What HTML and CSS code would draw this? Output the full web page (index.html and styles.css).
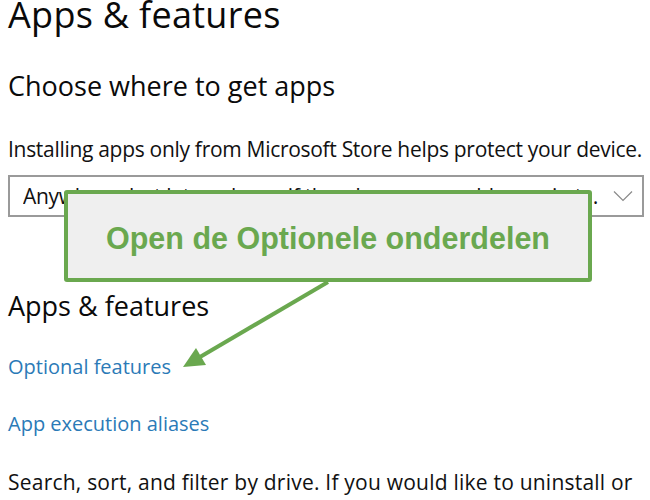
FILE: index.html
```html
<!DOCTYPE html>
<html>
<head>
<meta charset="utf-8">
<link rel="stylesheet" href="styles.css">
</head>
<body>
<main class="page">
  <h1 class="title">Apps &amp; features</h1>
  <h2 class="subtitle first">Choose where to get apps</h2>
  <p class="text install">Installing apps only from Microsoft Store helps protect your device.</p>
  <div class="select">
    <span class="select-text">Anywhere, but let me know if there's a comparable app in the Microsoft Store</span>
    <svg class="chev" width="20" height="12" viewBox="0 0 20 12"><path d="M1 1.5 L10 10.5 L19 1.5" fill="none" stroke="#8a8a8a" stroke-width="1.2"/></svg>
  </div>
  <h2 class="subtitle second">Apps &amp; features</h2>
  <a class="link l1" href="#">Optional features</a>
  <a class="link l2" href="#">App execution aliases</a>
  <p class="text last">Search, sort, and filter by drive. If you would like to uninstall or</p>
</main>
<div class="callout">Open de Optionele onderdelen</div>
<svg class="arrow" width="650" height="500" viewBox="0 0 650 500">
  <line x1="328" y1="282" x2="200" y2="357" stroke="#6aa84f" stroke-width="4"/>
  <polygon points="183,367 196,348 206,365" fill="#6aa84f"/>
</svg>
</body>
</html>
```
FILE: styles.css
```css
html, body { margin: 0; padding: 0; background: #fff; }
body { width: 650px; height: 500px; overflow: hidden; position: relative; font-family: "Open Sans", "Noto Sans", sans-serif; color: #111; }
.page { padding: 0 0 0 8px; display: flex; flex-direction: column; align-items: flex-start; }
.title { margin: -8px 0 0 0; font-weight: 400; font-size: 36px; line-height: 46px; letter-spacing: 0.3px; color: #0a0a0a; }
.subtitle { margin: 0; font-weight: 400; font-size: 27px; line-height: 36px; letter-spacing: 0; color: #0a0a0a; }
.subtitle.first { margin-top: 30px; }
.text { margin: 0; font-size: 21px; line-height: 28px; }
.install { margin-top: 31px; letter-spacing: -0.3px; }
.select { margin-top: 12px; box-sizing: border-box; width: 636px; height: 42px; border: 2px solid #9a9a9a; display: flex; align-items: center; padding: 0 9px 0 13px; gap: 14px; }
.select-text { flex: 1; min-width: 0; white-space: nowrap; overflow: hidden; text-overflow: ellipsis; font-size: 21px; letter-spacing: -0.3px; }
.chev { flex: none; }
.subtitle.second { margin-top: 71px; }
.link { color: #2b7ab7; text-decoration: none; font-size: 20px; line-height: 28px; }
.l1 { margin-top: 29px; }
.l2 { margin-top: 29px; }
.text.last { margin-top: 30px; letter-spacing: 0.22px; }
.callout { position: absolute; left: 64px; top: 190px; width: 528px; height: 92px; box-sizing: border-box; border: 4px solid #6aa84f; border-radius: 3px; background: #efefef; color: #6aa84f; font-family: "Liberation Sans", Arial, sans-serif; font-weight: 700; font-size: 30.5px; line-height: 1; display: flex; align-items: center; justify-content: center; padding-top: 5px; }
.arrow { position: absolute; left: 0; top: 0; pointer-events: none; }
```
